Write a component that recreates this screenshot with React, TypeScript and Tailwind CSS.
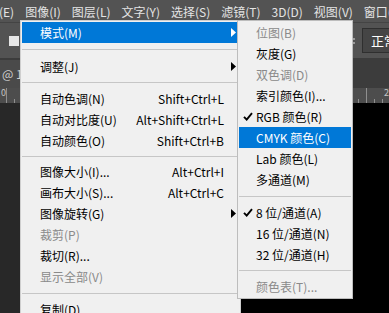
import React from 'react';

type Row =
  | { kind: 'item'; label: string; shortcut?: string; arrow?: boolean; active?: boolean; disabled?: boolean; checked?: boolean }
  | { kind: 'sep'; cls: string };

const topMenus = ['编辑(E)', '图像(I)', '图层(L)', '文字(Y)', '选择(S)', '滤镜(T)', '3D(D)', '视图(V)', '窗口(W)'];

const imageMenu: Row[] = [
  { kind: 'item', label: '模式(M)', arrow: true, active: true },
  { kind: 'sep', cls: 'h-[13px] pt-[6px]' },
  { kind: 'item', label: '调整(J)', arrow: true },
  { kind: 'sep', cls: 'h-[11px] pt-[5px]' },
  { kind: 'item', label: '自动色调(N)', shortcut: 'Shift+Ctrl+L' },
  { kind: 'item', label: '自动对比度(U)', shortcut: 'Alt+Shift+Ctrl+L' },
  { kind: 'item', label: '自动颜色(O)', shortcut: 'Shift+Ctrl+B' },
  { kind: 'sep', cls: 'h-[10px] pt-[5px]' },
  { kind: 'item', label: '图像大小(I)...', shortcut: 'Alt+Ctrl+I' },
  { kind: 'item', label: '画布大小(S)...', shortcut: 'Alt+Ctrl+C' },
  { kind: 'item', label: '图像旋转(G)', arrow: true },
  { kind: 'item', label: '裁剪(P)', disabled: true },
  { kind: 'item', label: '裁切(R)...' },
  { kind: 'item', label: '显示全部(V)', disabled: true },
  { kind: 'sep', cls: 'h-[12px] pt-[6px]' },
  { kind: 'item', label: '复制(D)...' },
  { kind: 'item', label: '应用图像(Y)...' },
];

const modeMenu: Row[] = [
  { kind: 'item', label: '位图(B)', disabled: true },
  { kind: 'item', label: '灰度(G)' },
  { kind: 'item', label: '双色调(D)', disabled: true },
  { kind: 'item', label: '索引颜色(I)...' },
  { kind: 'item', label: 'RGB 颜色(R)', checked: true },
  { kind: 'item', label: 'CMYK 颜色(C)', active: true },
  { kind: 'item', label: 'Lab 颜色(L)' },
  { kind: 'item', label: '多通道(M)' },
  { kind: 'sep', cls: 'h-[12px] pt-[6px]' },
  { kind: 'item', label: '8 位/通道(A)', checked: true },
  { kind: 'item', label: '16 位/通道(N)' },
  { kind: 'item', label: '32 位/通道(H)' },
  { kind: 'sep', cls: 'h-[11px] pt-[5px]' },
  { kind: 'item', label: '颜色表(T)...', disabled: true },
];

const Arrow = ({ white }: { white?: boolean }) => (
  <svg width="5" height="9" viewBox="0 0 5 9">
    <path d="M0 0 L5 4.5 L0 9 Z" fill={white ? '#ffffff' : '#000000'} />
  </svg>
);

const Check = () => (
  <svg width="10" height="9" viewBox="0 0 10 9">
    <path d="M1 4.8 L3.7 7.6 L9 1.2" stroke="#000" strokeWidth="1.9" fill="none" />
  </svg>
);

const Separator = ({ cls }: { cls: string }) => (
  <div className={cls}>
    <div className="h-px bg-[#c6c6c6]" />
  </div>
);

const MainItem = ({ row }: { row: Extract<Row, { kind: 'item' }> }) => {
  const color = row.active ? 'bg-[#0078d7] text-white' : row.disabled ? 'text-[#8a8a8a]' : 'text-black';
  return (
    <div className={`h-[21px] flex items-center pl-[18px] ${color}`}>
      <span className="whitespace-nowrap">{row.label}</span>
      <span className="flex-1" />
      {row.shortcut && <span className="whitespace-nowrap">{row.shortcut}</span>}
      <span className="w-[15px] h-full flex items-center pl-[7px]">{row.arrow && <Arrow white={row.active} />}</span>
    </div>
  );
};

const SubItem = ({ row }: { row: Extract<Row, { kind: 'item' }> }) => {
  const color = row.active ? 'bg-[#0078d7] text-white' : row.disabled ? 'text-[#8a8a8a]' : 'text-black';
  return (
    <div className={`relative h-[21px] flex items-center pl-[17px] ${color}`}>
      {row.checked && (
        <span className="absolute left-[4px] top-[6px]">
          <Check />
        </span>
      )}
      <span className="whitespace-nowrap">{row.label}</span>
    </div>
  );
};

const RulerTicks = ({ offset }: { offset: number }) => (
  <svg width="389" height="15" className="block">
    {Array.from({ length: 50 }).map((_, i) => {
      const x = offset + i * 8;
      const h = i % 5 === 0 ? 15 : 4;
      return <rect key={i} x={x} y={15 - h} width="1" height={h} fill="#8f8f8f" />;
    })}
  </svg>
);

export default function App() {
  return (
    <div className="relative w-[389px] h-[313px] overflow-hidden bg-[#282828] text-[12px] font-['Noto_Sans_CJK_SC','Microsoft_YaHei',sans-serif]">
      {/* menu bar */}
      <div className="h-[22px] pt-[2px] bg-[#535353] flex items-center gap-[11px] text-[#e4e4e4] whitespace-nowrap">
        {topMenus.map((m, i) => (
          <span key={m} className={i === 0 ? 'ml-[-25px]' : ''}>
            {m}
          </span>
        ))}
      </div>

      {/* options bar */}
      <div className="h-[36px] bg-[#535353] border-t border-[#444444] flex items-center relative">
        <div className="ml-[9px] w-[10px] h-[10px] bg-[#e6e6e6]" />
        <div className="ml-auto flex items-center gap-[7px]">
          <div className="flex flex-col gap-[2px]">
            <span className="w-[2px] h-[2px] bg-[#9a9a9a]" />
            <span className="w-[2px] h-[2px] bg-[#9a9a9a]" />
          </div>
          <div className="w-[40px] h-[25px] mr-[-13px] bg-[#454545] border border-[#2f2f2f] text-white text-[13px] flex items-center pl-[8px]">
            正常
          </div>
        </div>
      </div>

      {/* doc tabs */}
      <div className="h-[30px] bg-[#3c3c3c] flex items-end">
        <div className="h-[28px] w-[150px] bg-[#4a4a4a] text-[#cfcfcf] flex items-center whitespace-nowrap">
          <span className="w-[60px] ml-[-60px] text-right overflow-hidden">未标题-1</span>
          <span className="ml-[2px]">@ 100%</span>
        </div>
      </div>

      {/* ruler */}
      <div className="relative h-[15px] bg-[#4d4d4d]">
        <RulerTicks offset={6} />
        <span className="absolute left-[1px] top-[0px] text-[9px] leading-[10px] text-[#c4c4c4]">0</span>
        <span className="absolute left-[384px] top-[0px] text-[9px] leading-[10px] text-[#c4c4c4]">2</span>
      </div>

      {/* canvas */}
      <div className="flex h-[210px]">
        <div className="w-[30px] bg-[#282828]" />
        <div className="flex-1 bg-black" />
      </div>

      {/* 图像 dropdown */}
      <div className="absolute left-[20px] top-[20px] w-[221px] h-[320px] bg-[#f0f0f0] border border-[#cfcfcf] p-[1px]">
        {imageMenu.map((r, i) =>
          r.kind === 'sep' ? <Separator key={i} cls={r.cls} /> : <MainItem key={i} row={r} />
        )}
      </div>

      {/* 模式 submenu */}
      <div className="absolute left-[237px] top-[20px] w-[116px] bg-[#f0f0f0] border border-[#bdbdbd] p-[1px]">
        {modeMenu.map((r, i) =>
          r.kind === 'sep' ? <Separator key={i} cls={r.cls} /> : <SubItem key={i} row={r} />
        )}
      </div>
    </div>
  );
}
